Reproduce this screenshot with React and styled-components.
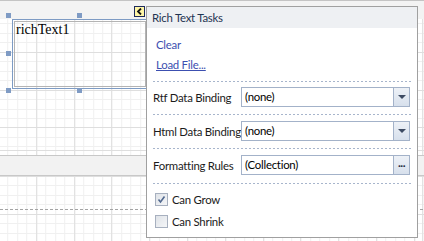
import React from "react";
import styled, { createGlobalStyle } from "styled-components";

const Global = createGlobalStyle`
  html, body { margin: 0; padding: 0; background: #fff; }
  body { font-family: Lato, "Noto Sans", "Liberation Sans", sans-serif; }
`;

const Surface = styled.div`
  position: relative;
  width: 424px;
  height: 241px;
  overflow: hidden;
  background: #fff;
  display: flex;
  flex-direction: column;
`;

const TopStrip = styled.div`
  height: 18px;
  flex: none;
  background: #f3f3f3;
  border-top: 1px solid #c4c4c4;
`;

const Grid = styled.div`
  position: relative;
  flex: none;
  height: ${(p) => p.$h}px;
  background-color: #fff;
  background-image:
    repeating-linear-gradient(to right, #dedede 0 1px, transparent 1px 37.8px),
    repeating-linear-gradient(to bottom, #dedede 0 1px, transparent 1px 37.8px),
    repeating-linear-gradient(to right, #f0f0f0 0 1px, transparent 1px 9.45px),
    repeating-linear-gradient(to bottom, #f0f0f0 0 1px, transparent 1px 9.45px);
  background-position: -1.8px ${(p) => p.$oy}px;
`;

const BandBar = styled.div`
  height: 19px;
  flex: none;
  background: #f2f2f2;
  border-top: 1px solid #c8c8c8;
  border-bottom: 1px solid #c8c8c8;
`;

const DashedRule = styled.div`
  position: absolute;
  left: 0;
  right: 0;
  top: ${(p) => p.$top}px;
  height: 1px;
  background-image: repeating-linear-gradient(to right, #a3a3a3 0 3px, transparent 3px 5px);
`;

const Control = styled.div`
  position: absolute;
  left: 12px;
  top: 19px;
  width: 132px;
  height: 66px;
  border: 1px solid #7d9bc4;
  padding: 1px;
`;

const ControlInner = styled.div`
  height: 100%;
  border: 1px solid #b4b4b4;
  box-sizing: border-box;
  font-family: "Liberation Serif", "Times New Roman", serif;
  font-size: 14px;
  color: #000;
  padding: 0 0 0 1px;
  line-height: 15px;
`;

const Handle = styled.div`
  position: absolute;
  left: ${(p) => p.$x}px;
  top: ${(p) => p.$y}px;
  width: 5px;
  height: 5px;
  background: #7f9bc4;
`;

const SmartTag = styled.div`
  position: absolute;
  left: 134px;
  top: 6px;
  width: 9px;
  height: 9px;
  border: 1px solid #1d2a5c;
  background: #fff6a6;
  display: flex;
  align-items: center;
  justify-content: center;
`;

const Popup = styled.div`
  position: absolute;
  left: 146px;
  top: 6px;
  width: 270px;
  height: 230px;
  border: 1px solid #a0a0a0;
  background: #fff;
  display: flex;
  flex-direction: column;
  font-family: Lato, "Noto Sans", sans-serif;
  font-size: 11.4px;
  letter-spacing: -0.25px;
  color: #1b1b1b;
`;

const Header = styled.div`
  height: 21px;
  flex: none;
  background: #eef0f3;
  color: #1f3452;
  padding-left: 5px;
  display: flex;
  align-items: center;
`;

const Section = styled.div`
  flex: none;
  height: ${(p) => p.$h}px;
  margin: 0 6px;
  box-sizing: border-box;
  padding-top: ${(p) => p.$pt}px;
  background-image: ${(p) =>
    p.$rule
      ? "repeating-linear-gradient(to right, #a7b5cc 0 2px, transparent 2px 4px)"
      : "none"};
  background-size: 100% 1px;
  background-repeat: no-repeat;
  display: flex;
  flex-direction: column;
  gap: ${(p) => p.$gap || 0}px;
`;

const LinkText = styled.span`
  display: block;
  height: 16px;
  line-height: 16px;
  padding-left: 3px;
  color: #3c4fb0;
  text-decoration: ${(p) => (p.$u ? "underline" : "none")};
`;

const Row = styled.div`
  display: flex;
  align-items: center;
  height: 20px;
`;

const Label = styled.span`
  width: 88px;
  flex: none;
  white-space: nowrap;
`;

const Combo = styled.div`
  width: 167px;
  height: 18px;
  border: 1px solid #a3b2c9;
  display: flex;
  align-items: stretch;
`;

const ComboValue = styled.span`
  flex: 1;
  padding-left: 3px;
  line-height: 18px;
  color: #000;
`;

const ComboButton = styled.div`
  width: 15px;
  border-left: 1px solid #a3b2c9;
  background: linear-gradient(#edf1f7, #d7e0ec);
  display: flex;
  align-items: center;
  justify-content: center;
`;

const Arrow = styled.div`
  width: 0;
  height: 0;
  border-left: 4px solid transparent;
  border-right: 4px solid transparent;
  border-top: 4px solid #3d4b63;
`;

const Dots = styled.span`
  font-size: 12px;
  line-height: 10px;
  font-weight: bold;
  color: #1e2a3d;
  letter-spacing: -0.5px;
  margin-top: -4px;
`;

const CheckRow = styled.div`
  display: flex;
  align-items: center;
  height: 13px;
  padding-left: 2px;
  gap: 4px;
`;

const Box = styled.div`
  width: 11px;
  height: 11px;
  border: 1px solid #a7b0bf;
  background: linear-gradient(135deg, #dfe3e8, #f5f6f8);
  display: flex;
  align-items: center;
  justify-content: center;
`;

function Combobox({ value, dots }) {
  return (
    <Combo>
      <ComboValue>{value}</ComboValue>
      <ComboButton>{dots ? <Dots>...</Dots> : <Arrow />}</ComboButton>
    </Combo>
  );
}

export default function App() {
  return (
    <>
      <Global />
      <Surface>
        <TopStrip />
        <Grid $h={136} $oy={-5} />
        <BandBar />
        <Grid $h={65} $oy={0}>
          <DashedRule $top={33} />
        </Grid>

        <Control>
          <ControlInner>richText1</ControlInner>
        </Control>
        <Handle $x={6} $y={13} />
        <Handle $x={77} $y={13} />
        <Handle $x={6} $y={51} />
        <Handle $x={6} $y={88} />
        <Handle $x={77} $y={88} />
        <SmartTag>
          <svg width="7" height="7" viewBox="0 0 7 7">
            <path d="M5 0.5 L2 3.5 L5 6.5" fill="none" stroke="#111" strokeWidth="1.8" />
          </svg>
        </SmartTag>

        <Popup>
          <Header>Rich Text Tasks</Header>
          <Section $h={53} $pt={9} $gap={4}>
            <LinkText>Clear</LinkText>
            <LinkText $u>Load File...</LinkText>
          </Section>
          <Section $h={33} $pt={6} $rule>
            <Row>
              <Label>Rtf Data Binding</Label>
              <Combobox value="(none)" />
            </Row>
          </Section>
          <Section $h={34} $pt={7} $rule>
            <Row>
              <Label>Html Data Binding</Label>
              <Combobox value="(none)" />
            </Row>
          </Section>
          <Section $h={35} $pt={7} $rule>
            <Row>
              <Label>Formatting Rules</Label>
              <Combobox value="(Collection)" dots />
            </Row>
          </Section>
          <Section $h={54} $pt={10} $gap={9} $rule>
            <CheckRow>
              <Box>
                <svg width="9" height="9" viewBox="0 0 9 9">
                  <path d="M1.5 4.5 L3.5 7 L7.5 1.5" fill="none" stroke="#52698f" strokeWidth="1.6" />
                </svg>
              </Box>
              <span>Can Grow</span>
            </CheckRow>
            <CheckRow>
              <Box />
              <span>Can Shrink</span>
            </CheckRow>
          </Section>
        </Popup>
      </Surface>
    </>
  );
}
